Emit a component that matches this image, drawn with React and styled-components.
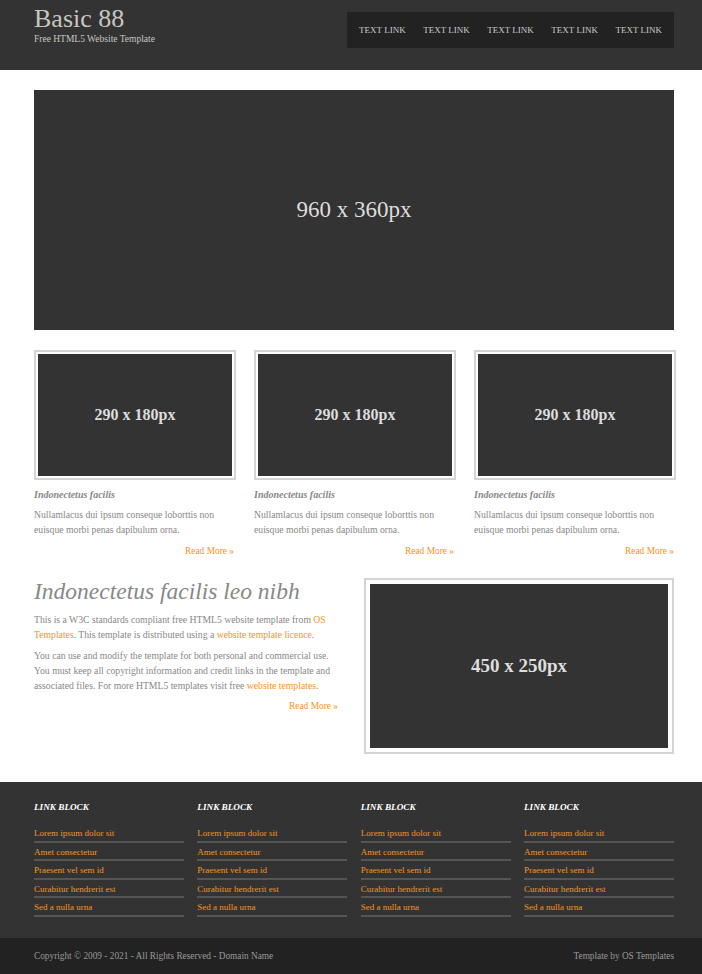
import React from 'react'
import styled, { createGlobalStyle } from 'styled-components'

const GlobalStyle = createGlobalStyle`
  body {
    margin: 0;
    background: #fff;
    font-family: "Liberation Serif", "Times New Roman", serif;
    color: #888;
  }
  * { box-sizing: border-box; }
`

const Row = styled.div`
  width: 640px;
  margin-left: 34px;
`

const Header = styled.header`
  background: #333;
  height: 70px;
`

const HeaderRow = styled(Row)`
  display: flex;
  justify-content: space-between;
  align-items: flex-start;
`

const Brand = styled.div`
  padding-top: 5px;
`

const Title = styled.h1`
  margin: 0;
  font-size: 26px;
  font-weight: normal;
  line-height: 28px;
  color: #c8c6c2;
`

const Tagline = styled.p`
  margin: 0;
  font-size: 9.5px;
  line-height: 12px;
  color: #c8c6c2;
`

const Nav = styled.nav`
  margin-top: 12px;
  height: 36px;
  background: #222;
  display: flex;
  align-items: center;
  gap: 17.5px;
  padding: 0 12px;
`

const NavLink = styled.a`
  font-size: 9px;
  color: #ccc;
  text-transform: uppercase;
  white-space: nowrap;
`

const Hero = styled.div`
  margin-top: 20px;
  height: 240px;
  background: #333;
  display: flex;
  align-items: center;
  justify-content: center;
  color: #ddd;
  font-size: 23px;
`

const Frame = styled.div`
  border: 2px solid #d4d4d4;
  padding: ${p => p.$pad}px;
  background: #fff;
`

const Placeholder = styled.div`
  height: ${p => p.$h}px;
  background: #333;
  display: flex;
  align-items: center;
  justify-content: center;
  color: #ddd;
  font-size: ${p => p.$size}px;
  font-weight: bold;
`

const Cards = styled.div`
  margin-top: 20px;
  display: grid;
  grid-template-columns: repeat(3, 202px);
  column-gap: 18px;
`

const Card = styled.article``

const CardTitle = styled.h2`
  margin: 9px 0 0;
  font-size: 10px;
  line-height: 12px;
  font-style: italic;
  font-weight: bold;
  color: #888;
`

const Text = styled.p`
  margin: ${p => p.$top || 0}px 0 0;
  font-size: 9.7px;
  line-height: 14.6px;
  color: #888;
`

const Orange = styled.a`
  color: #f7931e;
`

const More = styled.p`
  margin: ${p => p.$top}px 0 0;
  text-align: right;
  font-size: 9.4px;
  line-height: 14px;
  padding-right: 2px;
`

const Feature = styled.section`
  margin-top: 20px;
  display: grid;
  grid-template-columns: 306px 310px;
  column-gap: 24px;
  align-items: start;
`

const FeatureTitle = styled.h2`
  margin: 0;
  font-size: 23.5px;
  line-height: 26px;
  font-weight: normal;
  font-style: italic;
  color: #888;
`

const Footer = styled.footer`
  margin-top: 28px;
  background: #333;
  padding: 19px 0 21px;
`

const FooterGrid = styled(Row)`
  display: grid;
  grid-template-columns: repeat(4, 150px);
  column-gap: 13.33px;
`

const BlockTitle = styled.h3`
  margin: 0;
  font-size: 9.2px;
  line-height: 12px;
  font-style: italic;
  font-weight: bold;
  text-transform: uppercase;
  color: #fff;
`

const LinkList = styled.ul`
  list-style: none;
  margin: 11px 0 0;
  padding: 0;
`

const LinkItem = styled.li`
  padding: 3px 0 1px;
  line-height: 12.5px;
  font-size: 9px;
  border-bottom: 2px solid #555;
  color: #f7931e;
`

const Bottom = styled.div`
  background: #222;
  height: 36px;
`

const BottomRow = styled(Row)`
  height: 36px;
  display: flex;
  align-items: center;
  justify-content: space-between;
  font-size: 9.3px;
  color: #999;
`

const navItems = ['Text Link', 'Text Link', 'Text Link', 'Text Link', 'Text Link']
const links = ['Lorem ipsum dolor sit', 'Amet consectetur', 'Praesent vel sem id', 'Curabitur hendrerit est', 'Sed a nulla urna']

export default function App() {
  return (
    <>
      <GlobalStyle />
      <Header>
        <HeaderRow>
          <Brand>
            <Title>Basic 88</Title>
            <Tagline>Free HTML5 Website Template</Tagline>
          </Brand>
          <Nav>
            {navItems.map((n, i) => <NavLink key={i}>{n}</NavLink>)}
          </Nav>
        </HeaderRow>
      </Header>

      <Row>
        <Hero>960 x 360px</Hero>

        <Cards>
          {[0, 1, 2].map(i => (
            <Card key={i}>
              <Frame $pad={2}>
                <Placeholder $h={122} $size={16}>290 x 180px</Placeholder>
              </Frame>
              <CardTitle>Indonectetus facilis</CardTitle>
              <Text $top={7}>Nullamlacus dui ipsum conseque loborttis non euisque morbi penas dapibulum orna.</Text>
              <More $top={7}><Orange>Read More &raquo;</Orange></More>
            </Card>
          ))}
        </Cards>

        <Feature>
          <div>
            <FeatureTitle>Indonectetus facilis leo nibh</FeatureTitle>
            <Text $top={9}>
              This is a W3C standards compliant free HTML5 website template from <Orange>OS Templates</Orange>. This template is distributed using a <Orange>website template licence</Orange>.
            </Text>
            <Text $top={7}>
              You can use and modify the template for both personal and commercial use. You must keep all copyright information and credit links in the template and associated files. For more HTML5 templates visit free <Orange>website templates</Orange>.
            </Text>
            <More $top={6}><Orange>Read More &raquo;</Orange></More>
          </div>
          <Frame $pad={4}>
            <Placeholder $h={164} $size={19}>450 x 250px</Placeholder>
          </Frame>
        </Feature>
      </Row>

      <Footer>
        <FooterGrid>
          {[0, 1, 2, 3].map(i => (
            <div key={i}>
              <BlockTitle>Link Block</BlockTitle>
              <LinkList>
                {links.map(l => <LinkItem key={l}>{l}</LinkItem>)}
              </LinkList>
            </div>
          ))}
        </FooterGrid>
      </Footer>
      <Bottom>
        <BottomRow>
          <span>Copyright &copy; 2009 - 2021 - All Rights Reserved - Domain Name</span>
          <span>Template by OS Templates</span>
        </BottomRow>
      </Bottom>
    </>
  )
}
